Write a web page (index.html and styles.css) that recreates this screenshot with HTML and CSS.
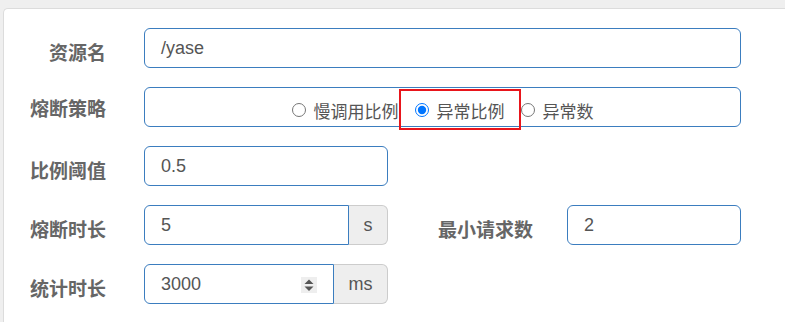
FILE: index.html
```html
<!DOCTYPE html>
<html lang="zh-CN">
<head>
<meta charset="utf-8">
<title>熔断规则</title>
<link rel="stylesheet" href="styles.css">
</head>
<body>
<div class="page">
  <div class="card">
    <div class="form">
      <div class="row">
        <div class="label">资源名</div>
        <div class="field w-full">/yase</div>
      </div>
      <div class="row">
        <div class="label label-tight">熔断策略</div>
        <div class="field radios w-full">
          <label class="opt"><input type="radio" name="grade"><span>慢调用比例</span></label>
          <label class="opt opt-marked"><input type="radio" name="grade" checked><span>异常比例</span></label>
          <label class="opt"><input type="radio" name="grade"><span>异常数</span></label>
        </div>
      </div>
      <div class="row">
        <div class="label">比例阈值</div>
        <div class="field w-half">0.5</div>
      </div>
      <div class="row">
        <div class="label">熔断时长</div>
        <div class="group w-half">
          <div class="field field-left">5</div>
          <div class="addon addon-s">s</div>
        </div>
        <div class="label label-right">最小请求数</div>
        <div class="field w-min">2</div>
      </div>
      <div class="row">
        <div class="label">统计时长</div>
        <div class="group w-half">
          <div class="field field-left number">
            <span>3000</span>
            <span class="spinner">
              <svg width="16" height="16" viewBox="0 0 16 16"><polygon points="3.5,7 8,2.5 12.5,7" fill="#555"/><polygon points="3.5,9.5 12.5,9.5 8,14" fill="#555"/></svg>
            </span>
          </div>
          <div class="addon addon-ms">ms</div>
        </div>
      </div>
    </div>
  </div>
</div>
</body>
</html>
```
FILE: styles.css
```css
html, body {
  margin: 0;
  padding: 0;
}
body {
  background: #efefef;
  font-family: "Liberation Sans", "Noto Sans CJK SC", sans-serif;
  overflow: hidden;
  width: 785px;
  height: 322px;
}
.page {
  padding: 8px 0 0 3px;
}
.card {
  background: #fff;
  border: 1px solid #dcdcdc;
  border-right: none;
  border-bottom: none;
  border-radius: 5px 0 0 0;
  width: 782px;
  height: 314px;
  box-sizing: border-box;
  padding-top: 19px;
}
.form {
  display: flex;
  flex-direction: column;
  gap: 19px;
}
.row {
  display: flex;
  align-items: center;
  height: 40px;
}
.label {
  width: 102px;
  margin-right: 38px;
  text-align: right;
  font-family: "Noto Sans CJK SC", sans-serif;
  font-weight: 700;
  font-size: 19px;
  color: #666;
  padding-top: 6px;
  line-height: 1;
}
.label-tight {
  padding-top: 0;
}
.label-right {
  width: 145px;
  margin-right: 34px;
}
.field {
  height: 40px;
  box-sizing: border-box;
  border: 1px solid #3b7dbf;
  border-radius: 6px;
  padding: 0 16px;
  display: flex;
  align-items: center;
  font-size: 18px;
  color: #555;
  background: #fff;
}
.w-full { width: 597px; }
.w-half { width: 244px; }
.w-min { width: 174px; }
.group {
  display: flex;
  height: 40px;
}
.field-left {
  flex: 1;
  border-radius: 6px 0 0 6px;
}
.addon {
  height: 40px;
  box-sizing: border-box;
  background: #eee;
  border: 1px solid #ccc;
  border-left: none;
  border-radius: 0 6px 6px 0;
  display: flex;
  align-items: center;
  justify-content: center;
  font-size: 18px;
  color: #555;
}
.addon-s { width: 39px; }
.addon-ms { width: 54px; }
.number {
  justify-content: space-between;
}
.spinner {
  width: 16px;
  height: 16px;
  background: #eee;
  display: flex;
  margin-top: 2px;
}
.radios {
  justify-content: center;
  align-items: flex-start;
  padding-top: 1px;
}
.opt {
  display: flex;
  align-items: center;
  gap: 8px;
  height: 41px;
  box-sizing: border-box;
  font-family: "Noto Sans CJK SC", sans-serif;
  font-size: 17px;
  color: #555;
  white-space: nowrap;
}
.opt input {
  margin: 0;
  width: 14px;
  height: 14px;
}
.opt span {
  line-height: 1;
  padding-top: 1px;
}
.opt-marked {
  border: 2px solid #e8151b;
  padding: 0 14px 0 14px;
}
```
